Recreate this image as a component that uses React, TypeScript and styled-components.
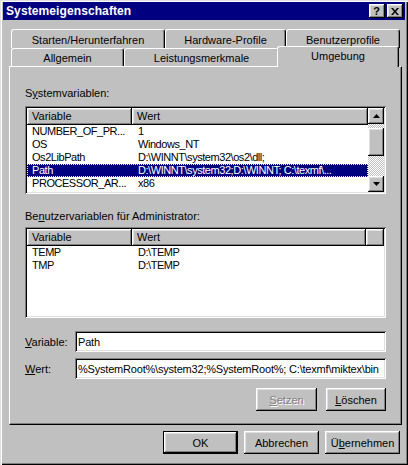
import React from "react";
import styled, { createGlobalStyle, css } from "styled-components";

const GlobalStyle = createGlobalStyle`
  html, body {
    margin: 0;
    padding: 0;
    background: #c0c0c0;
  }
  * {
    box-sizing: border-box;
  }
`;

const uiFont = `"Liberation Sans", Arial, sans-serif`;

const raised = css`
  background: #c0c0c0;
  box-shadow: inset -1px -1px #000, inset 1px 1px #fff, inset -2px -2px #808080, inset 2px 2px #dfdfdf;
`;

const sunken = css`
  box-shadow: inset 1px 1px #808080, inset -1px -1px #fff, inset 2px 2px #000, inset -2px -2px #dfdfdf;
`;

const Window = styled.div`
  width: 408px;
  height: 465px;
  background: #c0c0c0;
  padding: 2px 3px 3px 3px;
  box-shadow: inset 1px 1px #dfdfdf, inset 2px 2px #fff, inset -1px -1px #000, inset -2px -2px #808080;
  font-family: ${uiFont};
  font-size: 11px;
  color: #000;
  display: flex;
  flex-direction: column;
`;

const TitleBar = styled.div`
  height: 18px;
  background: #000080;
  color: #fff;
  display: flex;
  align-items: center;
  justify-content: space-between;
  padding: 0 2px 0 3px;
`;

const TitleText = styled.span`
  font-weight: bold;
  font-size: 12px;
  letter-spacing: 0.1px;
`;

const CaptionButtons = styled.div`
  display: flex;
  gap: 2px;
`;

const CaptionButton = styled.div`
  ${raised};
  width: 16px;
  height: 14px;
  display: flex;
  align-items: center;
  justify-content: center;
  color: #000;
  font-weight: bold;
  font-size: 11px;
  line-height: 14px;
  padding-right: 1px;
`;

const Sheet = styled.div`
  width: 393px;
  margin: 9px 0 0 6px;
  display: flex;
  flex-direction: column;
`;

const TabRow = styled.div<{ $h: number }>`
  height: ${(p) => p.$h}px;
  display: flex;
  align-items: flex-end;
  padding-left: 2px;
`;

const Tab = styled.div<{ $w: number; $active?: boolean }>`
  width: ${(p) => p.$w}px;
  height: 100%;
  display: flex;
  align-items: center;
  justify-content: center;
  background: #c0c0c0;
  border-top: 1px solid #fff;
  border-left: 1px solid #fff;
  border-right: 1px solid #000;
  box-shadow: inset -1px 0 #808080;
  border-radius: 3px 3px 0 0;
  white-space: nowrap;
  padding-top: 1px;
  ${(p) =>
    p.$active &&
    css`
      position: relative;
      z-index: 1;
      height: 21px;
      margin: 0 -2px -1px;
      padding: 0 0 3px;
    `}
`;

const Panel = styled.div`
  height: 359px;
  border-top: 1px solid #fff;
  border-left: 1px solid #fff;
  border-right: 1px solid #000;
  border-bottom: 1px solid #000;
  box-shadow: inset -1px -1px #808080;
  padding: 20px 15px 0 15px;
  display: flex;
  flex-direction: column;
`;

const GroupLabel = styled.div<{ $gap: number; $after: number }>`
  height: 13px;
  line-height: 13px;
  margin-top: ${(p) => p.$gap}px;
  margin-bottom: ${(p) => p.$after}px;
  white-space: nowrap;
`;

const Key = styled.span`
  text-decoration: underline;
  text-underline-offset: 1px;
`;

const ListBox = styled.div<{ $h: number }>`
  ${sunken};
  height: ${(p) => p.$h}px;
  background: #fff;
  padding: 2px;
  display: flex;
  overflow: hidden;
`;

const ListMain = styled.div`
  flex: 1;
  display: flex;
  flex-direction: column;
  min-width: 0;
`;

const HeaderRow = styled.div`
  height: 17px;
  display: flex;
  flex-shrink: 0;
`;

const HeaderCell = styled.div<{ $w?: number }>`
  ${raised};
  ${(p) => (p.$w ? `width: ${p.$w}px;` : "flex: 1;")}
  height: 17px;
  line-height: 17px;
  padding-left: 5px;
  white-space: nowrap;
`;

const Row = styled.div<{ $selected?: boolean }>`
  height: 13px;
  line-height: 13px;
  display: flex;
  white-space: nowrap;
  ${(p) =>
    p.$selected &&
    css`
      background: #000080;
      color: #fff;
      outline: 1px dotted #ffff80;
      outline-offset: -1px;
    `}
`;

const Cell = styled.div<{ $w?: number; $pad: number }>`
  ${(p) => (p.$w ? `width: ${p.$w}px;` : "flex: 1;")}
  padding-left: ${(p) => p.$pad}px;
  overflow: hidden;
  letter-spacing: -0.45px;
`;

const ScrollBar = styled.div`
  width: 16px;
  display: flex;
  flex-direction: column;
  background: repeating-conic-gradient(#c0c0c0 0% 25%, #ffffff 0% 50%) 0 0 / 2px 2px;
`;

const ScrollButton = styled.div`
  ${raised};
  width: 16px;
  height: 16px;
  flex-shrink: 0;
  display: flex;
  align-items: center;
  justify-content: center;
`;

const Thumb = styled.div`
  ${raised};
  height: 28px;
  margin-top: 4px;
`;

const Spacer = styled.div`
  flex: 1;
`;

const FieldRow = styled.div<{ $gap: number }>`
  display: flex;
  align-items: center;
  margin-top: ${(p) => p.$gap}px;
`;

const FieldLabel = styled.label`
  width: 50px;
  white-space: nowrap;
`;

const TextInput = styled.input`
  ${sunken};
  flex: 1;
  height: 21px;
  border: none;
  outline: none;
  background: #fff;
  padding: 0 2px 0 3px;
  font-family: ${uiFont};
  font-size: 11px;
  letter-spacing: -0.2px;
  color: #000;
  min-width: 0;
`;

const ButtonRow = styled.div<{ $gap: number; $top: number; $right: number }>`
  display: flex;
  justify-content: flex-end;
  gap: ${(p) => p.$gap}px;
  margin-top: ${(p) => p.$top}px;
  padding-right: ${(p) => p.$right}px;
`;

const Button = styled.button<{ $w: number; $default?: boolean }>`
  ${raised};
  width: ${(p) => p.$w}px;
  height: 23px;
  border: none;
  padding: 0;
  font-family: ${uiFont};
  font-size: 11px;
  color: #000;
  ${(p) =>
    p.$default &&
    css`
      border: 1px solid #000;
    `}
  &:disabled {
    color: #808080;
    text-shadow: 1px 1px 0 #fff;
  }
`;

const systemVars = [
  ["NUMBER_OF_PR...", "1"],
  ["OS", "Windows_NT"],
  ["Os2LibPath", "D:\\WINNT\\system32\\os2\\dll;"],
  ["Path", "D:\\WINNT\\system32;D:\\WINNT; C:\\texmf\\..."],
  ["PROCESSOR_AR...", "x86"],
];

const userVars = [
  ["TEMP", "D:\\TEMP"],
  ["TMP", "D:\\TEMP"],
];

function Arrow({ up }: { up?: boolean }) {
  return (
    <svg width="7" height="4" viewBox="0 0 7 4">
      <polygon points={up ? "3.5,0 7,4 0,4" : "0,0 7,0 3.5,4"} fill="#000" />
    </svg>
  );
}

export default function App() {
  return (
    <>
      <GlobalStyle />
      <Window>
        <TitleBar>
          <TitleText>Systemeigenschaften</TitleText>
          <CaptionButtons>
            <CaptionButton>?</CaptionButton>
            <CaptionButton>
              <svg width="8" height="7" viewBox="0 0 8 7">
                <path d="M0 0h2l2 2.4L6 0h2L5 3.5 8 7H6L4 4.6 2 7H0l3-3.5z" fill="#000" />
              </svg>
            </CaptionButton>
          </CaptionButtons>
        </TitleBar>

        <Sheet>
          <TabRow $h={19}>
            <Tab $w={154}>Starten/Herunterfahren</Tab>
            <Tab $w={121}>Hardware-Profile</Tab>
            <Tab $w={114}>Benutzerprofile</Tab>
          </TabRow>
          <TabRow $h={18}>
            <Tab $w={113}>Allgemein</Tab>
            <Tab $w={155}>Leistungsmerkmale</Tab>
            <Tab $w={122} $active>
              Umgebung
            </Tab>
          </TabRow>

          <Panel>
            <GroupLabel $gap={0} $after={6}>
              S<Key>y</Key>stemvariablen:
            </GroupLabel>
            <ListBox $h={88}>
              <ListMain>
                <HeaderRow>
                  <HeaderCell $w={105}>Variable</HeaderCell>
                  <HeaderCell>Wert</HeaderCell>
                </HeaderRow>
                {systemVars.map(([name, value]) => (
                  <Row key={name} $selected={name === "Path"}>
                    <Cell $w={105} $pad={5}>
                      {name}
                    </Cell>
                    <Cell $pad={6}>{value}</Cell>
                  </Row>
                ))}
              </ListMain>
              <ScrollBar>
                <ScrollButton>
                  <Arrow up />
                </ScrollButton>
                <Thumb />
                <Spacer />
                <ScrollButton>
                  <Arrow />
                </ScrollButton>
              </ScrollBar>
            </ListBox>

            <GroupLabel $gap={16} $after={4}>
              Be<Key>n</Key>utzervariablen für Administrator:
            </GroupLabel>
            <ListBox $h={91}>
              <ListMain>
                <HeaderRow>
                  <HeaderCell $w={105}>Variable</HeaderCell>
                  <HeaderCell $w={234}>Wert</HeaderCell>
                  <HeaderCell />
                </HeaderRow>
                {userVars.map(([name, value]) => (
                  <Row key={name}>
                    <Cell $w={105} $pad={5}>
                      {name}
                    </Cell>
                    <Cell $pad={6}>{value}</Cell>
                  </Row>
                ))}
              </ListMain>
            </ListBox>

            <FieldRow $gap={13}>
              <FieldLabel htmlFor="var-name">
                <Key>V</Key>ariable:
              </FieldLabel>
              <TextInput id="var-name" defaultValue="Path" />
            </FieldRow>
            <FieldRow $gap={6}>
              <FieldLabel htmlFor="var-value">
                <Key>W</Key>ert:
              </FieldLabel>
              <TextInput
                id="var-value"
                defaultValue="%SystemRoot%\system32;%SystemRoot%; C:\texmf\miktex\bin"
              />
            </FieldRow>

            <ButtonRow $gap={9} $top={9} $right={0}>
              <Button $w={61} disabled>
                <Key>S</Key>etzen
              </Button>
              <Button $w={60}>
                <Key>L</Key>öschen
              </Button>
            </ButtonRow>
          </Panel>

          <ButtonRow $gap={6} $top={6} $right={2}>
            <Button $w={75} $default>
              OK
            </Button>
            <Button $w={75}>Abbrechen</Button>
            <Button $w={75}>
              Ü<Key>b</Key>ernehmen
            </Button>
          </ButtonRow>
        </Sheet>
      </Window>
    </>
  );
}
